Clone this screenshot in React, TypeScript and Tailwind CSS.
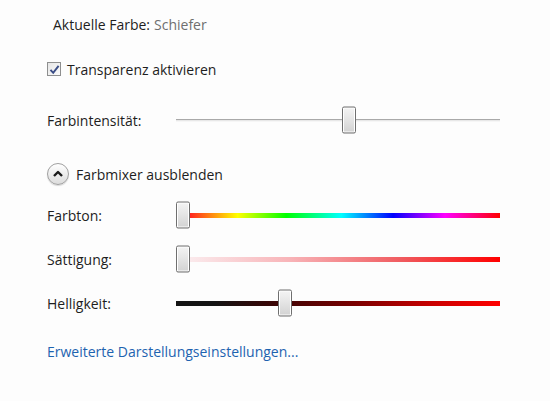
import React from 'react'

const font = { fontFamily: '"Open Sans", "Noto Sans", Arial, sans-serif' }

const Thumb: React.FC<{ left: number }> = ({ left }) => (
  <div
    className="absolute top-1/2 -translate-y-1/2 w-[14px] h-[27px] rounded-[2px] border border-[#6f6f6f] bg-gradient-to-b from-[#f4f4f4] via-[#e4e4e4] to-[#d2d2d2] shadow-[inset_0_0_0_1px_#ffffff]"
    style={{ left }}
  />
)

const SliderRow: React.FC<{ label: string; barClass: string; thumb: number; mt: string }> = ({ label, barClass, thumb, mt }) => (
  <div className={`flex items-center h-[28px] ${mt}`}>
    <span className="w-[129px] text-[14px] text-[#1e1e1e]">{label}</span>
    <div className="relative w-[324px] h-[28px] flex items-center">
      <div className={`w-full ${barClass}`} />
      <Thumb left={thumb} />
    </div>
  </div>
)

export default function App() {
  return (
    <div className="w-[550px] h-[401px] bg-[#fdfdfd] pl-[47px] pt-[14px]" style={font}>
      <div className="flex items-center h-[20px] pl-[6px] text-[14px]">
        <span className="text-[#1e1e1e]">Aktuelle Farbe:</span>
        <span className="ml-[4px] text-[#6f6f6f]">Schiefer</span>
      </div>

      <label className="flex items-center h-[20px] mt-[25px] gap-[6px] text-[14px] text-[#1e1e1e]">
        <span className="w-[14px] h-[14px] border border-[#8e8f8f] bg-gradient-to-br from-[#e6e6e6] to-[#fbfbfb] flex items-center justify-center">
          <svg width="11" height="11" viewBox="0 0 11 11">
            <path d="M1.5 5.8 L4.2 8.8 L9.6 1.8" fill="none" stroke="#3a4d86" strokeWidth="1.9" />
          </svg>
        </span>
        Transparenz aktivieren
      </label>

      <SliderRow
        label="Farbintensität:"
        barClass="h-[3px] border-t border-[#a9a9a9] bg-[#e8e8e8] border-b border-b-[#f6f6f6]"
        thumb={166}
        mt="mt-[27px]"
      />

      <div className="flex items-center h-[24px] mt-[28px] gap-[7px] text-[14px] text-[#1e1e1e]">
        <span className="w-[22px] h-[22px] rounded-full border border-[#a0a0a0] bg-gradient-to-b from-[#ffffff] to-[#dcdcdc] flex items-center justify-center shadow-[0_1px_1px_rgba(0,0,0,0.15)]">
          <svg width="12" height="12" viewBox="0 0 12 12">
            <path d="M2 8 L6 4 L10 8" fill="none" stroke="#1a1a1a" strokeWidth="2.4" strokeLinejoin="round" />
          </svg>
        </span>
        Farbmixer ausblenden
      </div>

      <SliderRow
        label="Farbton:"
        barClass="h-[5px] bg-[linear-gradient(to_right,#ff0000_0%,#ff2020_4%,#ffff00_19%,#00ff00_34%,#00ffff_51%,#0000ff_67%,#ff00ff_83%,#ff0000_100%)]"
        thumb={0}
        mt="mt-[15px]"
      />

      <SliderRow
        label="Sättigung:"
        barClass="h-[5px] bg-[linear-gradient(to_right,#fbf1f3_0%,#f8b4b8_35%,#f05a5e_70%,#ff0000_100%)]"
        thumb={0}
        mt="mt-[16px]"
      />

      <SliderRow
        label="Helligkeit:"
        barClass="h-[5px] bg-[linear-gradient(to_right,#141414_0%,#141414_12%,#3a0505_30%,#7a0000_55%,#cc0000_80%,#ff0000_100%)]"
        thumb={102}
        mt="mt-[16px]"
      />

      <div className="flex items-center h-[20px] mt-[24px] text-[14px] text-[#1e63b0]">
        Erweiterte Darstellungseinstellungen...
      </div>
    </div>
  )
}
